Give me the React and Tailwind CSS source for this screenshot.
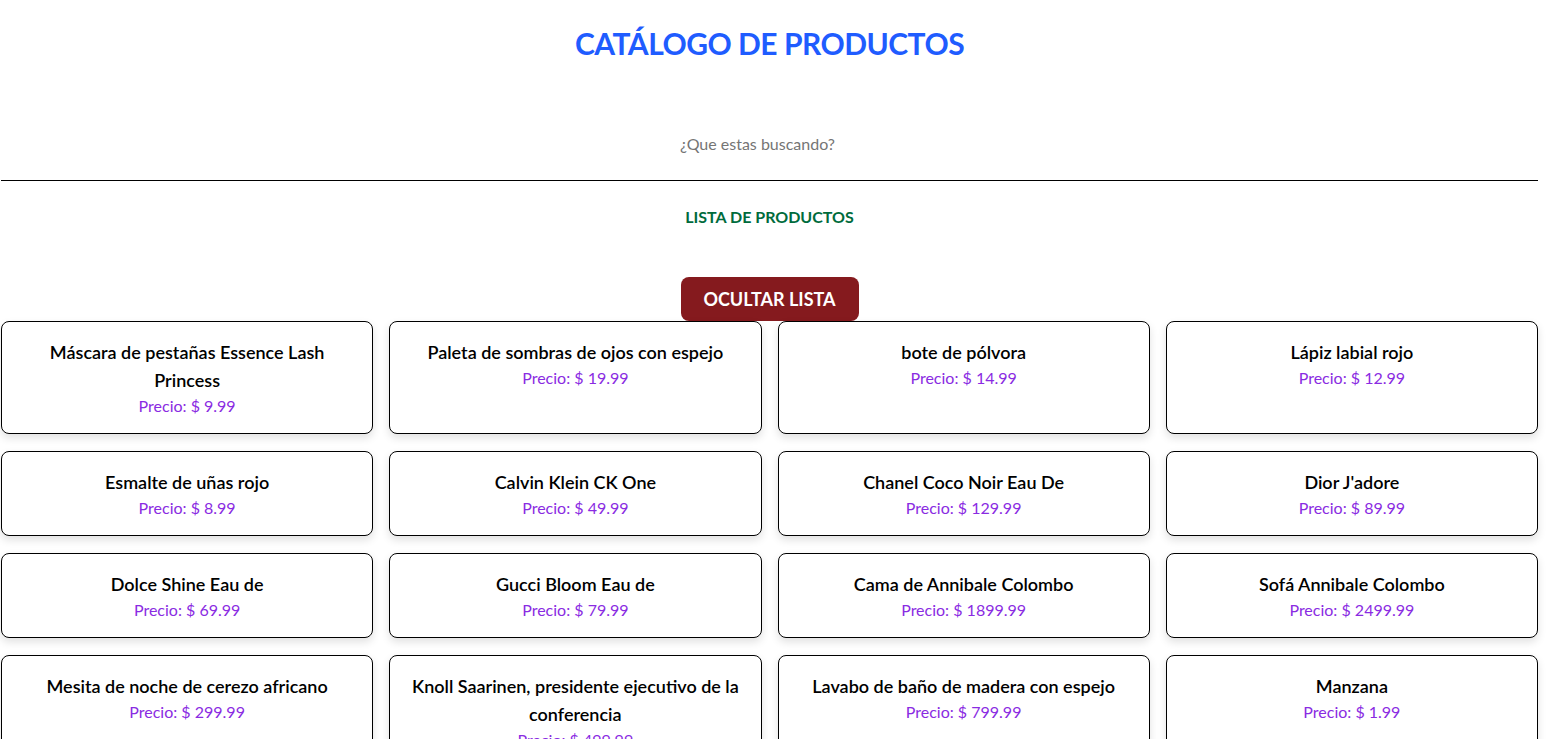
import React, { useState } from 'react';

const products = [
  { name: 'Máscara de pestañas Essence Lash Princess', price: 9.99 },
  { name: 'Paleta de sombras de ojos con espejo', price: 19.99 },
  { name: 'bote de pólvora', price: 14.99 },
  { name: 'Lápiz labial rojo', price: 12.99 },
  { name: 'Esmalte de uñas rojo', price: 8.99 },
  { name: 'Calvin Klein CK One', price: 49.99 },
  { name: 'Chanel Coco Noir Eau De', price: 129.99 },
  { name: "Dior J'adore", price: 89.99 },
  { name: 'Dolce Shine Eau de', price: 69.99 },
  { name: 'Gucci Bloom Eau de', price: 79.99 },
  { name: 'Cama de Annibale Colombo', price: 1899.99 },
  { name: 'Sofá Annibale Colombo', price: 2499.99 },
  { name: 'Mesita de noche de cerezo africano', price: 299.99 },
  { name: 'Knoll Saarinen, presidente ejecutivo de la conferencia', price: 499.99 },
  { name: 'Lavabo de baño de madera con espejo', price: 799.99 },
  { name: 'Manzana', price: 1.99 },
];

const App = () => {
  const [query, setQuery] = useState('');
  const [visible, setVisible] = useState(true);

  const filtered = products.filter(p => p.name.toLowerCase().includes(query.toLowerCase()));

  return (
    <div className="min-h-screen w-[1539px] bg-white px-[1px] font-['Lato','Liberation_Sans',sans-serif] text-black">
      <h1 className="mt-[22px] text-center text-[30px] font-bold leading-[42px] tracking-[-0.5px] text-[#1f5cff]">CATÁLOGO DE PRODUCTOS</h1>

      <input
        value={query}
        onChange={(e) => setQuery(e.target.value)}
        placeholder="¿Que estas buscando?"
        className="mt-[46px] block h-[71px] w-full border-b border-black pb-[4px] pr-[24px] text-center text-[16px] outline-none placeholder:text-[#757575]"
      />

      <h3 className="mt-[26px] text-center text-[16px] font-bold leading-[20px] text-[#006b3c]">LISTA DE PRODUCTOS</h3>

      <div className="mt-[50px] flex justify-center">
        <button
          onClick={() => setVisible(v => !v)}
          className="h-[44px] w-[178px] rounded-[8px] bg-[#851a1e] text-[18px] font-bold text-white"
        >
          {visible ? 'OCULTAR LISTA' : 'MOSTRAR LISTA'}
        </button>
      </div>

      {visible && (
        <div className="grid grid-cols-4 gap-x-4 gap-y-[17px] pb-8">
          {filtered.map(item => (
            <div
              key={item.name}
              className="flex flex-col items-center rounded-[8px] border border-black bg-white px-4 pb-[15px] pt-[16px] text-center shadow-[0_4px_8px_rgba(0,0,0,0.12)]"
            >
              <div className="text-[18px] font-semibold leading-[28px]">{item.name}</div>
              <div className="text-[16px] leading-[24px] text-[#8a2be2]">Precio: $ {item.price}</div>
            </div>
          ))}
        </div>
      )}
    </div>
  );
};

export default App;
